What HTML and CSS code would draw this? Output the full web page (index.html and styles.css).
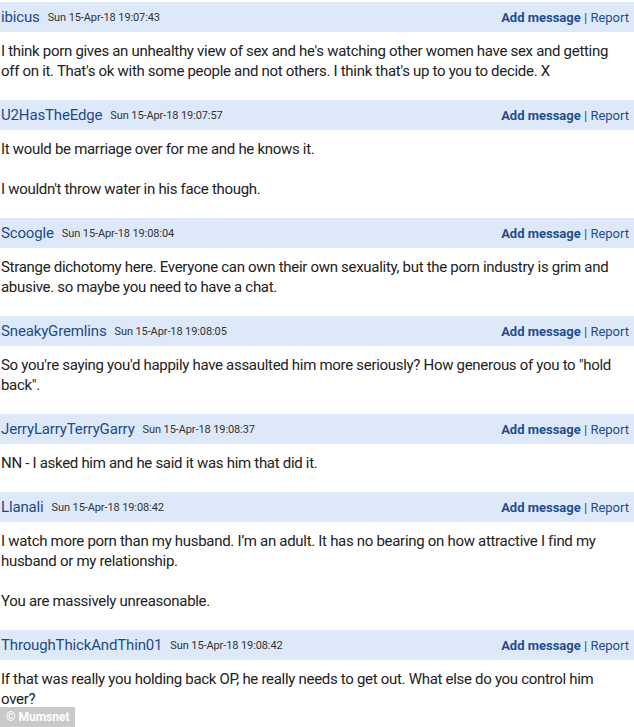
FILE: index.html
```html
<!DOCTYPE html>
<html lang="en">
<head>
    <meta charset="UTF-8">
    <title>Thread</title>
    <link rel="stylesheet" href="styles.css">
</head>
<body>
<div class="thread">
    <div class="post">
        <div class="postHead">
            <span class="name">ibicus</span>
            <span class="date">Sun 15-Apr-18 19:07:43</span>
            <span class="actions"><a class="add">Add message</a> | <a class="report">Report</a></span>
        </div>
        <div class="postBody">
            <p>I think porn gives an unhealthy view of sex and he's watching other women have sex and getting off on it. That's ok with some people and not others. I think that's up to you to decide. X</p>
        </div>
    </div>
    <div class="post">
        <div class="postHead">
            <span class="name">U2HasTheEdge</span>
            <span class="date">Sun 15-Apr-18 19:07:57</span>
            <span class="actions"><a class="add">Add message</a> | <a class="report">Report</a></span>
        </div>
        <div class="postBody">
            <p>It would be marriage over for me and he knows it.</p>
            <p>I wouldn't throw water in his face though.</p>
        </div>
    </div>
    <div class="post">
        <div class="postHead">
            <span class="name">Scoogle</span>
            <span class="date">Sun 15-Apr-18 19:08:04</span>
            <span class="actions"><a class="add">Add message</a> | <a class="report">Report</a></span>
        </div>
        <div class="postBody">
            <p>Strange dichotomy here. Everyone can own their own sexuality, but the porn industry is grim and abusive. so maybe you need to have a chat.</p>
        </div>
    </div>
    <div class="post">
        <div class="postHead">
            <span class="name">SneakyGremlins</span>
            <span class="date">Sun 15-Apr-18 19:08:05</span>
            <span class="actions"><a class="add">Add message</a> | <a class="report">Report</a></span>
        </div>
        <div class="postBody">
            <p>So you're saying you'd happily have assaulted him more seriously? How generous of you to "hold back".</p>
        </div>
    </div>
    <div class="post">
        <div class="postHead">
            <span class="name">JerryLarryTerryGarry</span>
            <span class="date">Sun 15-Apr-18 19:08:37</span>
            <span class="actions"><a class="add">Add message</a> | <a class="report">Report</a></span>
        </div>
        <div class="postBody">
            <p>NN - I asked him and he said it was him that did it.</p>
        </div>
    </div>
    <div class="post">
        <div class="postHead">
            <span class="name">Llanali</span>
            <span class="date">Sun 15-Apr-18 19:08:42</span>
            <span class="actions"><a class="add">Add message</a> | <a class="report">Report</a></span>
        </div>
        <div class="postBody">
            <p>I watch more porn than my husband. I’m an adult. It has no bearing on how attractive I find my husband or my relationship.</p>
            <p>You are massively unreasonable.</p>
        </div>
    </div>
    <div class="post">
        <div class="postHead">
            <span class="name">ThroughThickAndThin01</span>
            <span class="date">Sun 15-Apr-18 19:08:42</span>
            <span class="actions"><a class="add">Add message</a> | <a class="report">Report</a></span>
        </div>
        <div class="postBody">
            <p>If that was really you holding back OP, he really needs to get out. What else do you control him over?</p>
        </div>
    </div>
</div>
<div class="credit">© Mumsnet</div>
</body>
</html>
```

FILE: styles.css
```css
body{
    margin: 0;
    font-family: Roboto, "Liberation Sans", Arial, sans-serif;
    color: #222;
    background-color: #fff;
    overflow: hidden;
}
.thread{
    padding-top: 2px;
}
.postHead{
    display: flex;
    align-items: center;
    height: 30px;
    padding: 0 5px 0 0;
    background-color: #dde9f8;
}
.name{
    font-size: 15px;
    color: #1d4b88;
    letter-spacing: -0.15px;
    padding-left: 1px;
    margin-right: 8px;
}
.date{
    font-size: 11px;
    color: #333;
    letter-spacing: -0.1px;
}
.actions{
    margin-left: auto;
    font-size: 13px;
    color: #1f4e8c;
}
.add{
    font-weight: bold;
}
.postBody{
    padding: 9px 6px 19px 1px;
    font-size: 15px;
    line-height: 20px;
    letter-spacing: -0.3px;
}
.postBody p{
    margin: 0 0 20px;
}
.postBody p:last-child{
    margin-bottom: 0;
}
.credit{
    position: absolute;
    left: 0;
    bottom: 0;
    height: 20px;
    line-height: 20px;
    padding: 0 6px;
    background-color: #c9c9c9;
    color: #fff;
    font-weight: bold;
    font-size: 12px;
}
```
